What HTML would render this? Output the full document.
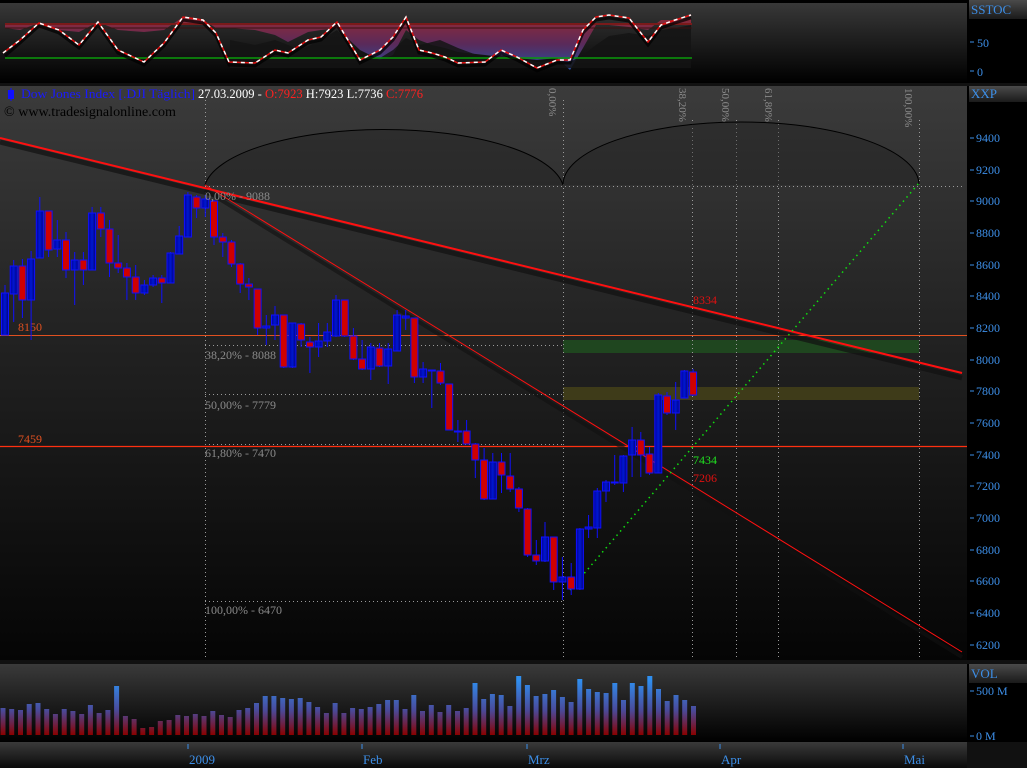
<!DOCTYPE html>
<html><head><meta charset="utf-8"><style>
html,body{margin:0;padding:0;background:#000;width:1027px;height:768px;overflow:hidden}
svg{display:block}
text{font-family:"Liberation Serif",serif}
</style></head><body>
<svg width="1027" height="768" viewBox="0 0 1027 768" xmlns="http://www.w3.org/2000/svg">
<defs>
<linearGradient id="gTop" x1="0" y1="0" x2="0" y2="1"><stop offset="0" stop-color="#3a3a3a"/><stop offset="1" stop-color="#000"/></linearGradient>
<linearGradient id="gMain" x1="0" y1="0" x2="0" y2="1"><stop offset="0" stop-color="#3b3b3b"/><stop offset="0.4" stop-color="#242424"/><stop offset="1" stop-color="#050505"/></linearGradient>
<linearGradient id="gVolBg" x1="0" y1="0" x2="0" y2="1"><stop offset="0" stop-color="#3a3a3a"/><stop offset="1" stop-color="#000"/></linearGradient>
<linearGradient id="gBot" x1="0" y1="0" x2="0" y2="1"><stop offset="0" stop-color="#3a3a3a"/><stop offset="1" stop-color="#0a0a0a"/></linearGradient>
<linearGradient id="gBox" x1="0" y1="0" x2="0" y2="1"><stop offset="0" stop-color="#4a4a4a"/><stop offset="1" stop-color="#1a1a1a"/></linearGradient>
<linearGradient id="gVol" gradientUnits="userSpaceOnUse" x1="0" y1="680" x2="0" y2="735"><stop offset="0" stop-color="#2f8ff0"/><stop offset="0.55" stop-color="#4a4a9a"/><stop offset="1" stop-color="#8a0000"/></linearGradient>
<linearGradient id="gSt" gradientUnits="userSpaceOnUse" x1="0" y1="20" x2="0" y2="68"><stop offset="0" stop-color="#8a2a3a"/><stop offset="0.5" stop-color="#5a2a5a"/><stop offset="1" stop-color="#2a4a9a"/></linearGradient>
<linearGradient id="gUp" x1="0" y1="0" x2="1" y2="0"><stop offset="0" stop-color="#0000a0"/><stop offset="0.5" stop-color="#0018d0"/><stop offset="1" stop-color="#000080"/></linearGradient>
</defs>

<!-- TOP PANEL -->
<rect x="0" y="0" width="967" height="83" fill="url(#gTop)"/>
<rect x="0" y="0" width="967" height="3" fill="#000"/>
<polygon fill="url(#gSt)" points="5,28 20,30 39,23 59,30 79,32 98,22 118,30 144,32 164,30 183,17 203,20 216,28 229,28 255,30 275,35 288,42 308,32 321,30 337,28 360,50 380,60 393,55 406,30 419,40 432,45 445,48 458,52 485,55 501,57 517,58 537,60 557,58 570,70 583,48 596,25 609,25 629,27 648,30 661,20 675,20 691,18 691,25 5,25"/>
<polygon fill="#141414" opacity="0.85" points="230,40 255,45 275,40 288,45 300,50 321,40 337,30 360,55 380,58 393,50 406,38 420,45 440,40 458,48 485,58 501,55 517,58 537,62 557,60 570,62 583,55 596,45 609,36 629,33 648,36 661,30 675,28 691,25 691,68 230,68"/>
<line x1="5" y1="24" x2="692" y2="24" stroke="#7a1a1a" stroke-width="2"/>
<line x1="5" y1="28" x2="692" y2="28" stroke="#3a1010" stroke-width="1"/>
<line x1="5" y1="58" x2="692" y2="58" stroke="#0a9a0a" stroke-width="1.5"/>
<polyline fill="none" stroke="#000" stroke-width="3" opacity="0.7" points="5,56 20,43 39,26 59,33 79,48 98,25 118,53 144,65 164,46 183,20 203,23 216,36 229,65 255,66 275,53 288,56 308,43 321,40 337,25 360,63 380,53 393,40 406,20 419,53 432,56 445,60 458,66 485,65 501,53 517,60 537,71 557,63 570,63 583,33 596,20 609,18 629,21 648,45 661,28 675,23 691,18"/>
<polyline fill="none" stroke="#e01010" stroke-width="1.5" points="3,53 20,40 39,23 59,30 79,45 98,22 118,50 144,62 164,43 183,17 203,20 216,33 229,62 255,63 275,50 288,53 308,40 321,37 337,22 360,60 380,50 393,37 406,17 419,50 432,53 445,57 458,63 485,62 501,50 517,57 537,68 557,60 570,60 583,30 596,17 609,15 629,18 648,42 661,25 675,20 691,15"/>
<polyline fill="none" stroke="#fff" stroke-width="1.5" stroke-dasharray="4 4" points="3,53 20,40 39,23 59,30 79,45 98,22 118,50 144,62 164,43 183,17 203,20 216,33 229,62 255,63 275,50 288,53 308,40 321,37 337,22 360,60 380,50 393,37 406,17 419,50 432,53 445,57 458,63 485,62 501,50 517,57 537,68 557,60 570,60 583,30 596,17 609,15 629,18 648,42 661,25 675,20 691,15"/>
<rect x="967" y="0" width="60" height="83" fill="#000"/>
<rect x="969" y="0" width="58" height="19" fill="url(#gBox)"/>
<text x="971" y="14" font-size="13" fill="#3d8fe8">SSTOC</text>
<line x1="970" y1="42" x2="974" y2="42" stroke="#3d8fe8"/><text x="977" y="47" font-size="12" fill="#3d8fe8">50</text>
<line x1="970" y1="71" x2="974" y2="71" stroke="#3d8fe8"/><text x="977" y="76" font-size="12" fill="#3d8fe8">0</text>

<!-- MAIN PANEL -->
<rect x="0" y="83" width="1027" height="3" fill="#111"/>
<rect x="0" y="86" width="967" height="574" fill="url(#gMain)"/>
<rect x="967" y="86" width="60" height="574" fill="#000"/>
<rect x="969" y="86" width="58" height="16" fill="url(#gBox)"/>
<text x="971" y="98" font-size="13" fill="#3d8fe8">XXP</text>
<g font-size="12" fill="#3d8fe8" stroke="none">
<text x="976" y="142">9400</text><text x="976" y="174">9200</text><text x="976" y="205">9000</text><text x="976" y="237">8800</text><text x="976" y="269">8600</text><text x="976" y="300">8400</text><text x="976" y="332">8200</text><text x="976" y="364">8000</text><text x="976" y="395">7800</text><text x="976" y="427">7600</text><text x="976" y="459">7400</text><text x="976" y="490">7200</text><text x="976" y="522">7000</text><text x="976" y="554">6800</text><text x="976" y="585">6600</text><text x="976" y="617">6400</text><text x="976" y="649">6200</text>
</g>
<g stroke="#3d8fe8"><line x1="970" y1="138" x2="974" y2="138"/><line x1="970" y1="170" x2="974" y2="170"/><line x1="970" y1="201" x2="974" y2="201"/><line x1="970" y1="233" x2="974" y2="233"/><line x1="970" y1="265" x2="974" y2="265"/><line x1="970" y1="296" x2="974" y2="296"/><line x1="970" y1="328" x2="974" y2="328"/><line x1="970" y1="360" x2="974" y2="360"/><line x1="970" y1="391" x2="974" y2="391"/><line x1="970" y1="423" x2="974" y2="423"/><line x1="970" y1="455" x2="974" y2="455"/><line x1="970" y1="486" x2="974" y2="486"/><line x1="970" y1="518" x2="974" y2="518"/><line x1="970" y1="550" x2="974" y2="550"/><line x1="970" y1="581" x2="974" y2="581"/><line x1="970" y1="613" x2="974" y2="613"/><line x1="970" y1="645" x2="974" y2="645"/></g>

<!-- zones -->
<rect x="563" y="340" width="356" height="13" fill="#1f4a1f" opacity="0.9"/>
<rect x="563" y="387" width="356" height="13" fill="#4a4518" opacity="0.75"/>

<!-- dotted verticals -->
<g stroke="#9a9a9a" stroke-width="1" stroke-dasharray="1 3">
<line x1="205.5" y1="100" x2="205.5" y2="660"/><line x1="563.5" y1="100" x2="563.5" y2="660"/><line x1="692.5" y1="120" x2="692.5" y2="660"/><line x1="736.5" y1="120" x2="736.5" y2="660"/><line x1="778.5" y1="120" x2="778.5" y2="660"/><line x1="919.5" y1="120" x2="919.5" y2="660"/>
<line x1="205" y1="186.5" x2="962" y2="186.5"/><line x1="205" y1="345.5" x2="563" y2="345.5"/><line x1="205" y1="394.5" x2="563" y2="394.5"/><line x1="205" y1="444.5" x2="563" y2="444.5"/><line x1="205" y1="601.5" x2="563" y2="601.5"/>
</g>
<!-- arcs -->
<path d="M205,185 A180,62 0 0 1 563,185" fill="#1e1e1e" fill-opacity="0.35" stroke="#000" stroke-width="1"/>
<path d="M563,185 A178,63 0 0 1 919,185" fill="#1e1e1e" fill-opacity="0.35" stroke="#000" stroke-width="1"/>

<!-- horizontal levels -->
<line x1="0" y1="335.5" x2="967" y2="335.5" stroke="#e05020" stroke-width="1"/>
<line x1="0" y1="446.5" x2="967" y2="446.5" stroke="#ff3010" stroke-width="1.2"/>
<text x="18" y="331" font-size="12" fill="#e05020">8150</text>
<text x="18" y="443" font-size="12" fill="#e05020">7459</text>

<g font-size="11" fill="#8a8a8a">
<text transform="translate(549,88) rotate(90)">0,00%</text>
<text transform="translate(679,88) rotate(90)">38,20%</text>
<text transform="translate(722,88) rotate(90)">50,00%</text>
<text transform="translate(765,88) rotate(90)">61,80%</text>
<text transform="translate(905,88) rotate(90)">100,00%</text>
</g>

<!-- trend lines shadows -->
<line x1="0" y1="142" x2="962" y2="378" stroke="#111" stroke-width="5" opacity="0.7"/>
<line x1="205" y1="190" x2="962" y2="657" stroke="#111" stroke-width="4" opacity="0.6"/>
<line x1="0" y1="138" x2="962" y2="373" stroke="#ff1010" stroke-width="2"/>
<line x1="205" y1="185" x2="962" y2="652" stroke="#ff1010" stroke-width="1"/>
<line x1="570" y1="590" x2="919" y2="183" stroke="#10e010" stroke-width="1.5" stroke-dasharray="1.5 4"/>
<text x="693" y="304" font-size="12" fill="#e01010">8334</text>
<text x="693" y="464" font-size="12" fill="#20e020">7434</text>
<text x="693" y="482" font-size="12" fill="#e01010">7206</text>

<!-- candles -->
<g stroke="#1010ff" stroke-width="1">
<line x1="5.0" y1="285" x2="5.0" y2="335"/><rect x="1.5" y="293" width="7" height="42" fill="url(#gUp)"/>
<line x1="13.7" y1="260" x2="13.7" y2="322"/><rect x="10.2" y="266" width="7" height="28" fill="url(#gUp)"/>
<line x1="22.4" y1="259" x2="22.4" y2="318"/><rect x="18.9" y="266" width="7" height="34" fill="#d00000"/>
<line x1="31.1" y1="251" x2="31.1" y2="340"/><rect x="27.6" y="259" width="7" height="41" fill="url(#gUp)"/>
<line x1="39.8" y1="197" x2="39.8" y2="258"/><rect x="36.3" y="211" width="7" height="47" fill="url(#gUp)"/>
<line x1="48.6" y1="211" x2="48.6" y2="257"/><rect x="45.1" y="211" width="7" height="39" fill="#d00000"/>
<line x1="57.3" y1="220" x2="57.3" y2="257"/><rect x="53.8" y="240" width="7" height="9" fill="url(#gUp)"/>
<line x1="66.0" y1="232" x2="66.0" y2="278"/><rect x="62.5" y="240" width="7" height="30" fill="#d00000"/>
<line x1="74.7" y1="252" x2="74.7" y2="305"/><rect x="71.2" y="260" width="7" height="10" fill="url(#gUp)"/>
<line x1="83.4" y1="252" x2="83.4" y2="285"/><rect x="79.9" y="260" width="7" height="10" fill="#d00000"/>
<line x1="92.1" y1="207" x2="92.1" y2="270"/><rect x="88.6" y="213" width="7" height="57" fill="url(#gUp)"/>
<line x1="100.8" y1="207" x2="100.8" y2="237"/><rect x="97.3" y="213" width="7" height="16" fill="#d00000"/>
<line x1="109.5" y1="220" x2="109.5" y2="277"/><rect x="106.0" y="229" width="7" height="34" fill="#d00000"/>
<line x1="118.2" y1="235" x2="118.2" y2="273"/><rect x="114.7" y="263" width="7" height="5" fill="#d00000"/>
<line x1="126.9" y1="263" x2="126.9" y2="300"/><rect x="123.4" y="268" width="7" height="9" fill="#d00000"/>
<line x1="135.7" y1="265" x2="135.7" y2="300"/><rect x="132.2" y="277" width="7" height="16" fill="#d00000"/>
<line x1="144.4" y1="280" x2="144.4" y2="295"/><rect x="140.9" y="285" width="7" height="8" fill="url(#gUp)"/>
<line x1="153.1" y1="275" x2="153.1" y2="287"/><rect x="149.6" y="278" width="7" height="7" fill="url(#gUp)"/>
<line x1="161.8" y1="275" x2="161.8" y2="303"/><rect x="158.3" y="278" width="7" height="5" fill="#d00000"/>
<line x1="170.5" y1="252" x2="170.5" y2="283"/><rect x="167.0" y="253" width="7" height="30" fill="url(#gUp)"/>
<line x1="179.2" y1="226" x2="179.2" y2="254"/><rect x="175.7" y="236" width="7" height="18" fill="url(#gUp)"/>
<line x1="187.9" y1="192" x2="187.9" y2="237"/><rect x="184.4" y="195" width="7" height="42" fill="url(#gUp)"/>
<line x1="196.6" y1="195" x2="196.6" y2="218"/><rect x="193.1" y="197" width="7" height="11" fill="#d00000"/>
<line x1="205.3" y1="195" x2="205.3" y2="217"/><rect x="201.8" y="199" width="7" height="9" fill="url(#gUp)"/>
<line x1="214.0" y1="200" x2="214.0" y2="245"/><rect x="210.5" y="201" width="7" height="36" fill="#d00000"/>
<line x1="222.8" y1="233" x2="222.8" y2="257"/><rect x="219.3" y="237" width="7" height="5" fill="#d00000"/>
<line x1="231.5" y1="240" x2="231.5" y2="267"/><rect x="228.0" y="242" width="7" height="22" fill="#d00000"/>
<line x1="240.2" y1="263" x2="240.2" y2="293"/><rect x="236.7" y="264" width="7" height="20" fill="#d00000"/>
<line x1="248.9" y1="278" x2="248.9" y2="300"/><rect x="245.4" y="284" width="7" height="3" fill="#d00000"/>
<line x1="257.6" y1="289" x2="257.6" y2="335"/><rect x="254.1" y="289" width="7" height="39" fill="#d00000"/>
<line x1="266.3" y1="315" x2="266.3" y2="345"/><rect x="262.8" y="326" width="7" height="2" fill="url(#gUp)"/>
<line x1="275.0" y1="306" x2="275.0" y2="340"/><rect x="271.5" y="315" width="7" height="10" fill="url(#gUp)"/>
<line x1="283.7" y1="315" x2="283.7" y2="368"/><rect x="280.2" y="315" width="7" height="52" fill="#d00000"/>
<line x1="292.4" y1="323" x2="292.4" y2="368"/><rect x="288.9" y="323" width="7" height="44" fill="url(#gUp)"/>
<line x1="301.1" y1="323" x2="301.1" y2="347"/><rect x="297.6" y="324" width="7" height="16" fill="#d00000"/>
<line x1="309.9" y1="337" x2="309.9" y2="373"/><rect x="306.4" y="342" width="7" height="5" fill="#d00000"/>
<line x1="318.6" y1="323" x2="318.6" y2="357"/><rect x="315.1" y="341" width="7" height="6" fill="url(#gUp)"/>
<line x1="327.3" y1="323" x2="327.3" y2="347"/><rect x="323.8" y="332" width="7" height="9" fill="url(#gUp)"/>
<line x1="336.0" y1="295" x2="336.0" y2="337"/><rect x="332.5" y="300" width="7" height="36" fill="url(#gUp)"/>
<line x1="344.7" y1="300" x2="344.7" y2="337"/><rect x="341.2" y="300" width="7" height="36" fill="#d00000"/>
<line x1="353.4" y1="328" x2="353.4" y2="360"/><rect x="349.9" y="336" width="7" height="23" fill="#d00000"/>
<line x1="362.1" y1="340" x2="362.1" y2="370"/><rect x="358.6" y="359" width="7" height="10" fill="#d00000"/>
<line x1="370.8" y1="343" x2="370.8" y2="380"/><rect x="367.3" y="347" width="7" height="22" fill="url(#gUp)"/>
<line x1="379.5" y1="343" x2="379.5" y2="367"/><rect x="376.0" y="348" width="7" height="18" fill="#d00000"/>
<line x1="388.2" y1="343" x2="388.2" y2="384"/><rect x="384.7" y="349" width="7" height="17" fill="url(#gUp)"/>
<line x1="397.1" y1="310" x2="397.1" y2="350"/><rect x="393.6" y="315" width="7" height="36" fill="url(#gUp)"/>
<line x1="405.7" y1="310" x2="405.7" y2="330"/><rect x="402.2" y="316" width="7" height="2" fill="url(#gUp)"/>
<line x1="414.4" y1="318" x2="414.4" y2="383"/><rect x="410.9" y="318" width="7" height="59" fill="#d00000"/>
<line x1="423.1" y1="362" x2="423.1" y2="383"/><rect x="419.6" y="369" width="7" height="8" fill="url(#gUp)"/>
<line x1="431.8" y1="370" x2="431.8" y2="408"/><rect x="428.3" y="370" width="7" height="1" fill="url(#gUp)"/>
<line x1="440.5" y1="363" x2="440.5" y2="385"/><rect x="437.0" y="371" width="7" height="12" fill="#d00000"/>
<line x1="449.2" y1="384" x2="449.2" y2="430"/><rect x="445.7" y="384" width="7" height="46" fill="#d00000"/>
<line x1="457.9" y1="420" x2="457.9" y2="442"/><rect x="454.4" y="431" width="7" height="1" fill="url(#gUp)"/>
<line x1="466.6" y1="420" x2="466.6" y2="444"/><rect x="463.1" y="431" width="7" height="13" fill="#d00000"/>
<line x1="475.3" y1="443" x2="475.3" y2="478"/><rect x="471.8" y="444" width="7" height="16" fill="#d00000"/>
<line x1="484.1" y1="448" x2="484.1" y2="500"/><rect x="480.6" y="460" width="7" height="39" fill="#d00000"/>
<line x1="492.8" y1="453" x2="492.8" y2="493"/><rect x="489.3" y="462" width="7" height="37" fill="url(#gUp)"/>
<line x1="501.5" y1="453" x2="501.5" y2="493"/><rect x="498.0" y="462" width="7" height="13" fill="#d00000"/>
<line x1="510.2" y1="453" x2="510.2" y2="492"/><rect x="506.7" y="476" width="7" height="13" fill="#d00000"/>
<line x1="518.9" y1="487" x2="518.9" y2="512"/><rect x="515.4" y="489" width="7" height="19" fill="#d00000"/>
<line x1="527.6" y1="508" x2="527.6" y2="557"/><rect x="524.1" y="509" width="7" height="46" fill="#d00000"/>
<line x1="536.3" y1="540" x2="536.3" y2="565"/><rect x="532.8" y="555" width="7" height="6" fill="#d00000"/>
<line x1="545.0" y1="522" x2="545.0" y2="562"/><rect x="541.5" y="537" width="7" height="24" fill="url(#gUp)"/>
<line x1="553.7" y1="537" x2="553.7" y2="590"/><rect x="550.2" y="537" width="7" height="45" fill="#d00000"/>
<line x1="562.4" y1="557" x2="562.4" y2="600"/><rect x="558.9" y="577" width="7" height="5" fill="url(#gUp)"/>
<line x1="571.2" y1="563" x2="571.2" y2="595"/><rect x="567.7" y="577" width="7" height="12" fill="#d00000"/>
<line x1="579.9" y1="528" x2="579.9" y2="590"/><rect x="576.4" y="529" width="7" height="60" fill="url(#gUp)"/>
<line x1="588.6" y1="515" x2="588.6" y2="538"/><rect x="585.1" y="527" width="7" height="2" fill="url(#gUp)"/>
<line x1="597.3" y1="488" x2="597.3" y2="538"/><rect x="593.8" y="491" width="7" height="37" fill="url(#gUp)"/>
<line x1="606.0" y1="480" x2="606.0" y2="502"/><rect x="602.5" y="482" width="7" height="9" fill="url(#gUp)"/>
<line x1="614.7" y1="455" x2="614.7" y2="485"/><rect x="611.2" y="482" width="7" height="1" fill="url(#gUp)"/>
<line x1="623.4" y1="455" x2="623.4" y2="492"/><rect x="619.9" y="456" width="7" height="27" fill="url(#gUp)"/>
<line x1="632.1" y1="427" x2="632.1" y2="477"/><rect x="628.6" y="440" width="7" height="15" fill="url(#gUp)"/>
<line x1="640.8" y1="432" x2="640.8" y2="477"/><rect x="637.3" y="440" width="7" height="15" fill="#d00000"/>
<line x1="649.5" y1="447" x2="649.5" y2="475"/><rect x="646.0" y="454" width="7" height="19" fill="#d00000"/>
<line x1="658.3" y1="393" x2="658.3" y2="473"/><rect x="654.8" y="395" width="7" height="78" fill="url(#gUp)"/>
<line x1="667.0" y1="392" x2="667.0" y2="415"/><rect x="663.5" y="396" width="7" height="17" fill="#d00000"/>
<line x1="675.7" y1="382" x2="675.7" y2="430"/><rect x="672.2" y="400" width="7" height="13" fill="url(#gUp)"/>
<line x1="684.4" y1="370" x2="684.4" y2="398"/><rect x="680.9" y="371" width="7" height="27" fill="url(#gUp)"/>
<line x1="693.1" y1="369" x2="693.1" y2="396"/><rect x="689.6" y="372" width="7" height="23" fill="#d00000"/>
</g>

<!-- fib labels (on top) -->
<g font-size="12" fill="#8a8a8a">
<text x="205" y="200">0,00% - 9088</text>
<text x="205" y="359">38,20% - 8088</text>
<text x="205" y="409">50,00% - 7779</text>
<text x="205" y="457">61,80% - 7470</text>
<text x="205" y="614">100,00% - 6470</text>
</g>

<!-- title -->
<line x1="11" y1="88" x2="11" y2="101" stroke="#1010ff"/>
<rect x="8" y="90" width="6" height="9" fill="#1010ff"/>
<text x="21" y="98" font-size="13" fill="#1a1aff" textLength="174" lengthAdjust="spacingAndGlyphs">Dow Jones Index [.DJI  Täglich]</text>
<text x="198" y="98" font-size="13" textLength="225" lengthAdjust="spacingAndGlyphs"><tspan fill="#fff">27.03.2009 - </tspan><tspan fill="#ff2020">O:7923</tspan><tspan fill="#fff"> H:7923 L:7736 </tspan><tspan fill="#ff2020">C:7776</tspan></text>
<text x="4" y="116" font-size="13.5" fill="#000" textLength="172" lengthAdjust="spacingAndGlyphs">© www.tradesignalonline.com</text>

<!-- VOLUME PANEL -->
<rect x="0" y="660" width="1027" height="4" fill="#111"/>
<rect x="0" y="664" width="967" height="78" fill="url(#gVolBg)"/>
<rect x="967" y="664" width="60" height="78" fill="#000"/>
<rect x="969" y="664" width="58" height="19" fill="url(#gBox)"/>
<text x="971" y="678" font-size="13" fill="#3d8fe8">VOL</text>
<line x1="970" y1="691" x2="974" y2="691" stroke="#3d8fe8"/><text x="976" y="695" font-size="12" fill="#3d8fe8">500 M</text>
<line x1="970" y1="736" x2="974" y2="736" stroke="#3d8fe8"/><text x="976" y="740" font-size="12" fill="#3d8fe8">0 M</text>
<g fill="url(#gVol)">
<rect x="0.5" y="708" width="5" height="27"/><rect x="9.2" y="709" width="5" height="26"/><rect x="18.0" y="710" width="5" height="25"/><rect x="26.7" y="704" width="5" height="31"/><rect x="35.5" y="703" width="5" height="32"/><rect x="44.2" y="709" width="5" height="26"/><rect x="52.9" y="714" width="5" height="21"/><rect x="61.7" y="709" width="5" height="26"/><rect x="70.4" y="711" width="5" height="24"/><rect x="79.2" y="714" width="5" height="21"/>
<rect x="87.9" y="705" width="5" height="30"/><rect x="96.6" y="713" width="5" height="22"/><rect x="105.4" y="710" width="5" height="25"/><rect x="114.1" y="686" width="5" height="49"/><rect x="122.9" y="716" width="5" height="19"/><rect x="131.6" y="719" width="5" height="16"/><rect x="140.3" y="728" width="5" height="7"/><rect x="149.1" y="727" width="5" height="8"/><rect x="157.8" y="721" width="5" height="14"/><rect x="166.6" y="720" width="5" height="15"/>
<rect x="175.3" y="715" width="5" height="20"/><rect x="184.0" y="716" width="5" height="19"/><rect x="192.8" y="714" width="5" height="21"/><rect x="201.5" y="716" width="5" height="19"/><rect x="210.3" y="711" width="5" height="24"/><rect x="219.0" y="715" width="5" height="20"/><rect x="227.7" y="717" width="5" height="18"/><rect x="236.5" y="710" width="5" height="25"/><rect x="245.2" y="708" width="5" height="27"/><rect x="254.0" y="703" width="5" height="32"/>
<rect x="262.7" y="696" width="5" height="39"/><rect x="271.4" y="696" width="5" height="39"/><rect x="280.2" y="698" width="5" height="37"/><rect x="288.9" y="699" width="5" height="36"/><rect x="297.7" y="698" width="5" height="37"/><rect x="306.4" y="702" width="5" height="33"/><rect x="315.1" y="707" width="5" height="28"/><rect x="323.9" y="713" width="5" height="22"/><rect x="332.6" y="703" width="5" height="32"/><rect x="341.4" y="713" width="5" height="22"/>
<rect x="350.1" y="708" width="5" height="27"/><rect x="358.8" y="709" width="5" height="26"/><rect x="367.6" y="707" width="5" height="28"/><rect x="376.3" y="704" width="5" height="31"/><rect x="385.1" y="700" width="5" height="35"/><rect x="393.8" y="700" width="5" height="35"/><rect x="402.5" y="709" width="5" height="26"/><rect x="411.3" y="695" width="5" height="40"/><rect x="420.0" y="711" width="5" height="24"/><rect x="428.8" y="705" width="5" height="30"/>
<rect x="437.5" y="712" width="5" height="23"/><rect x="446.2" y="705" width="5" height="30"/><rect x="455.0" y="711" width="5" height="24"/><rect x="463.7" y="708" width="5" height="27"/><rect x="472.5" y="683" width="5" height="52"/><rect x="481.2" y="699" width="5" height="36"/><rect x="489.9" y="694" width="5" height="41"/><rect x="498.7" y="695" width="5" height="40"/><rect x="507.4" y="706" width="5" height="29"/><rect x="516.2" y="676" width="5" height="59"/>
<rect x="524.9" y="685" width="5" height="50"/><rect x="533.6" y="696" width="5" height="39"/><rect x="542.4" y="694" width="5" height="41"/><rect x="551.1" y="690" width="5" height="45"/><rect x="559.9" y="697" width="5" height="38"/><rect x="568.6" y="702" width="5" height="33"/><rect x="577.3" y="679" width="5" height="56"/><rect x="586.1" y="689" width="5" height="46"/><rect x="594.8" y="692" width="5" height="43"/><rect x="603.6" y="693" width="5" height="42"/>
<rect x="612.3" y="683" width="5" height="52"/><rect x="621.0" y="700" width="5" height="35"/><rect x="629.8" y="683" width="5" height="52"/><rect x="638.5" y="686" width="5" height="49"/><rect x="647.3" y="676" width="5" height="59"/><rect x="656.0" y="689" width="5" height="46"/><rect x="664.7" y="701" width="5" height="34"/><rect x="673.5" y="695" width="5" height="40"/><rect x="682.2" y="700" width="5" height="35"/><rect x="691.0" y="706" width="5" height="29"/>
</g>

<!-- BOTTOM AXIS -->
<rect x="0" y="742" width="1027" height="26" fill="url(#gBot)"/>
<rect x="967" y="742" width="60" height="26" fill="#111"/>
<g stroke="#3d8fe8"><line x1="188" y1="744" x2="188" y2="749"/><line x1="362" y1="744" x2="362" y2="749"/><line x1="527" y1="744" x2="527" y2="749"/><line x1="720" y1="744" x2="720" y2="749"/><line x1="903" y1="744" x2="903" y2="749"/></g>
<g font-size="13" fill="#3d8fe8"><text x="189" y="764">2009</text><text x="363" y="764">Feb</text><text x="528" y="764">Mrz</text><text x="721" y="764">Apr</text><text x="904" y="764">Mai</text></g>
</svg>
</body></html>
